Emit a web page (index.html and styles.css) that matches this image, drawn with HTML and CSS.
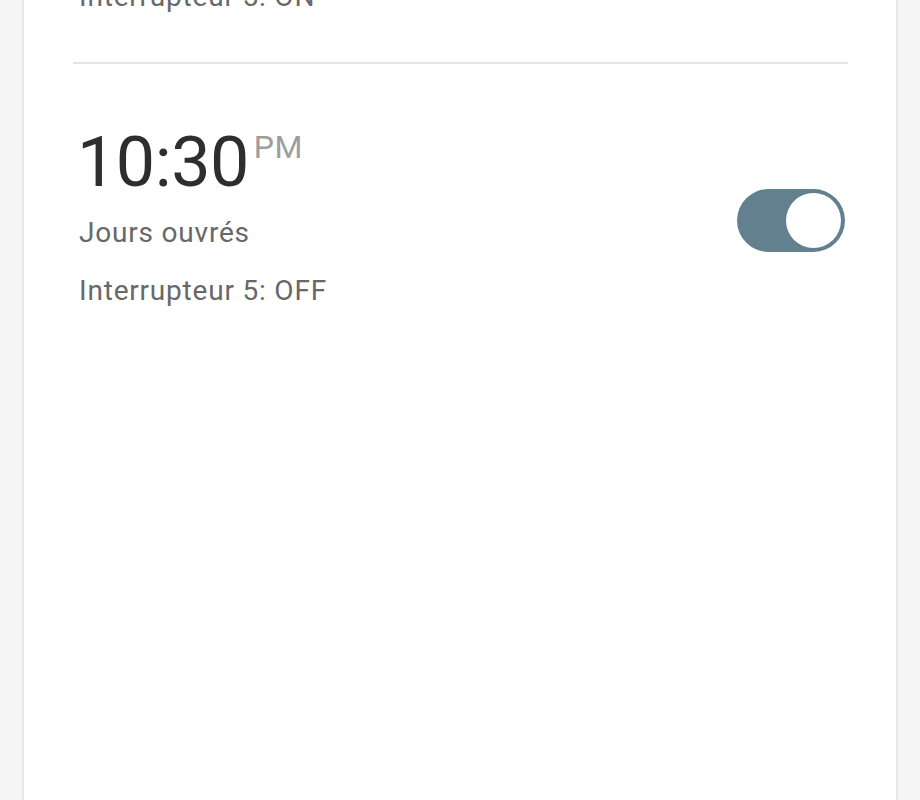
FILE: index.html
```html
<!DOCTYPE html>
<html lang="fr">
<head>
<meta charset="UTF-8">
<meta name="viewport" content="width=device-width, initial-scale=1.0">
<title>Alarmes</title>
<link rel="stylesheet" href="styles.css">
</head>
<body>
<div class="card">
    <div class="alarm alarm-prev">
        <div class="info">
            <div class="line">Interrupteur 5: ON</div>
        </div>
    </div>
    <div class="divider"></div>
    <div class="alarm">
        <div class="info">
            <div class="time">10:30<span class="ampm">PM</span></div>
            <div class="line">Jours ouvrés</div>
            <div class="line">Interrupteur 5: OFF</div>
        </div>
        <div class="toggle on"><div class="knob"></div></div>
    </div>
</div>
</body>
</html>
```

FILE: styles.css
```css
body {
    margin: 0;
    background-color: #f5f5f5;
    font-family: 'Roboto', 'Liberation Sans', sans-serif;
    overflow: hidden;
}
.card {
    background-color: #ffffff;
    margin: -32px 24px 0 24px;
    min-height: 900px;
    box-shadow: 0 0 3px rgba(0, 0, 0, 0.18);
}
.alarm {
    display: flex;
    align-items: center;
    justify-content: space-between;
    padding: 56px 51px 0 55px;
}
.alarm-prev {
    padding-top: 0;
    padding-bottom: 36px;
}
.time {
    font-size: 70px;
    line-height: 84px;
    color: #2e2e2e;
    margin-left: -2px;
    letter-spacing: -0.5px;
}
.ampm {
    font-size: 32px;
    color: #9e9e9e;
    vertical-align: top;
    line-height: 54px;
    margin-left: 5px;
    letter-spacing: 0.5px;
}
.line {
    font-size: 28px;
    line-height: 58px;
    color: #686868;
    letter-spacing: 0.8px;
}
.divider {
    height: 2px;
    background-color: #e4e4e4;
    margin: 0 48px 0 49px;
}
.toggle {
    width: 108px;
    height: 63px;
    border-radius: 32px;
    background-color: #bdbdbd;
    display: flex;
    align-items: center;
    padding: 0 4px;
    box-sizing: border-box;
}
.toggle.on {
    background-color: #62808d;
    justify-content: flex-end;
}
.knob {
    width: 55px;
    height: 55px;
    border-radius: 50%;
    background-color: #ffffff;
}
```
